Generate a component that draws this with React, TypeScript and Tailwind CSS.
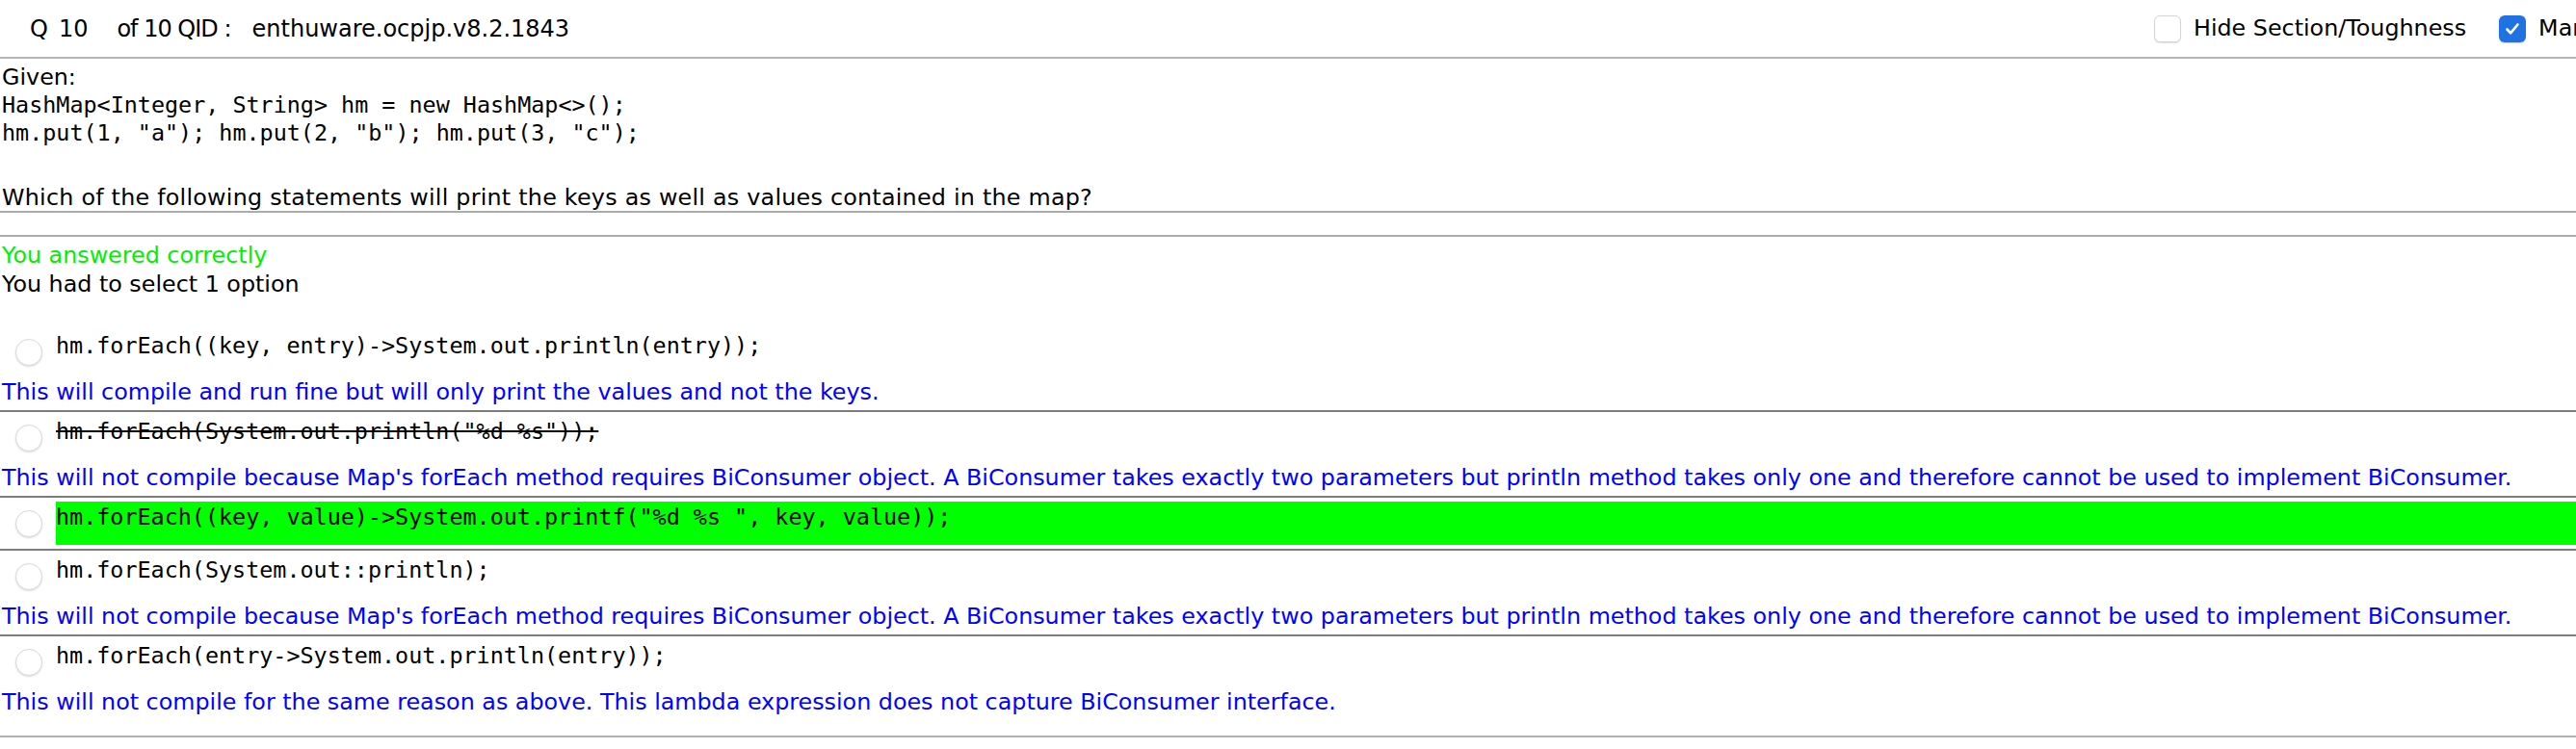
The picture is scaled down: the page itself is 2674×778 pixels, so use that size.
import React from "react";

const sans = "font-['DejaVu_Sans','Verdana',sans-serif]";
const mono = "font-['DejaVu_Sans_Mono','Menlo',monospace]";

type Option = {
  code: string;
  note?: string;
  struck?: boolean;
  correct?: boolean;
  last?: boolean;
};

const options: Option[] = [
  {
    code: "hm.forEach((key, entry)->System.out.println(entry));",
    note: "This will compile and run fine but will only print the values and not the keys.",
  },
  {
    code: 'hm.forEach(System.out.println("%d %s"));',
    struck: true,
    note: "This will not compile because Map's forEach method requires BiConsumer object. A BiConsumer takes exactly two parameters but println method takes only one and therefore cannot be used to implement BiConsumer.",
  },
  {
    code: 'hm.forEach((key, value)->System.out.printf("%d %s ", key, value));',
    correct: true,
  },
  {
    code: "hm.forEach(System.out::println);",
    note: "This will not compile because Map's forEach method requires BiConsumer object. A BiConsumer takes exactly two parameters but println method takes only one and therefore cannot be used to implement BiConsumer.",
  },
  {
    code: "hm.forEach(entry->System.out.println(entry));",
    note: "This will not compile for the same reason as above. This lambda expression does not capture BiConsumer interface.",
    last: true,
  },
];

function Checkbox({ checked }: { checked?: boolean }) {
  if (checked) {
    return (
      <span className="flex h-[28px] w-[28px] shrink-0 items-center justify-center rounded-[6px] bg-[#1f72e2] shadow-[0_1px_1px_rgba(0,0,0,0.2)]">
        <svg width="18" height="18" viewBox="0 0 18 18" fill="none">
          <path d="M3.5 9.5l3.6 3.8L14.5 4.5" stroke="white" strokeWidth="2.6" strokeLinecap="round" strokeLinejoin="round" />
        </svg>
      </span>
    );
  }
  return (
    <span className="h-[28px] w-[28px] shrink-0 rounded-[6px] border border-[#d4d4d4] bg-white shadow-[0_1px_1px_rgba(0,0,0,0.12)]" />
  );
}

function OptionRow({ o, first }: { o: Option; first?: boolean }) {
  return (
    <div className={`${first ? "pt-[33px]" : "pt-[4px]"} pb-[4px] ${o.last ? "" : "border-b-2 border-[#7c7c7c]"}`}>
      <div className="flex h-[45px]">
        <div className="pl-[16px] pr-[14px] pt-[9px]">
          <span className="block h-[28px] w-[28px] rounded-full border border-[#dadada] bg-white shadow-[0_1px_2px_rgba(0,0,0,0.14)]" />
        </div>
        <div className={`flex-1 pt-[2px] ${mono} text-[23.4px] leading-[29px] text-black whitespace-pre ${o.correct ? "bg-[#00ff00]" : ""} ${o.struck ? "line-through" : ""}`}>
          {o.code}
        </div>
      </div>
      {o.note && (
        <p className="mt-[5px] pl-[2px] text-[23.8px] leading-[29px] text-[#0000ff] whitespace-nowrap">{o.note}</p>
      )}
    </div>
  );
}

export default function App() {
  return (
    <div className={`w-full overflow-hidden bg-white text-black ${sans}`}>
      {/* header */}
      <div className="flex h-[61px] items-center border-b-2 border-[#b6b6b6] text-[24px] whitespace-nowrap">
        <div className="flex w-[2236px] shrink-0 items-center pl-[31px]">
          <span>Q</span>
          <span className="ml-[11px]">10</span>
          <span className="ml-[30px] tracking-[-1px]">of 10 QID :</span>
          <span className="ml-[22px]">enthuware.ocpjp.v8.2.1843</span>
        </div>
        <div className="flex shrink-0 items-center text-[23.8px]">
          <Checkbox />
          <span className="ml-[13px]">Hide Section/Toughness</span>
          <span className="ml-[34px]">
            <Checkbox checked />
          </span>
          <span className="ml-[13px]">Mark for Review</span>
        </div>
      </div>

      {/* question */}
      <div className="border-b-2 border-[#ababab] pl-[2px] pt-[5px] text-[23.8px] leading-[29px]">
        <p>Given:</p>
        <p className={`${mono} text-[23.4px] whitespace-pre`}>{"HashMap<Integer, String> hm = new HashMap<>();"}</p>
        <p className={`${mono} text-[23.4px] whitespace-pre`}>{'hm.put(1, "a"); hm.put(2, "b"); hm.put(3, "c");'}</p>
        <p className="mt-[38px] leading-[28px] tracking-[0.24px]">
          Which of the following statements will print the keys as well as values contained in the map?
        </p>
      </div>

      <div className="h-[25px] border-b-2 border-[#ababab]" />

      {/* answer */}
      <div className="border-b-2 border-[#b0b0b0] pb-[16px] text-[23.8px]">
        <div className="pl-[2px] pt-[4px] leading-[30px]">
          <p className="text-[#00ee00]">You answered correctly</p>
          <p>You had to select 1 option</p>
        </div>
        {options.map((o, i) => (
          <OptionRow key={i} o={o} first={i === 0} />
        ))}
      </div>
    </div>
  );
}
